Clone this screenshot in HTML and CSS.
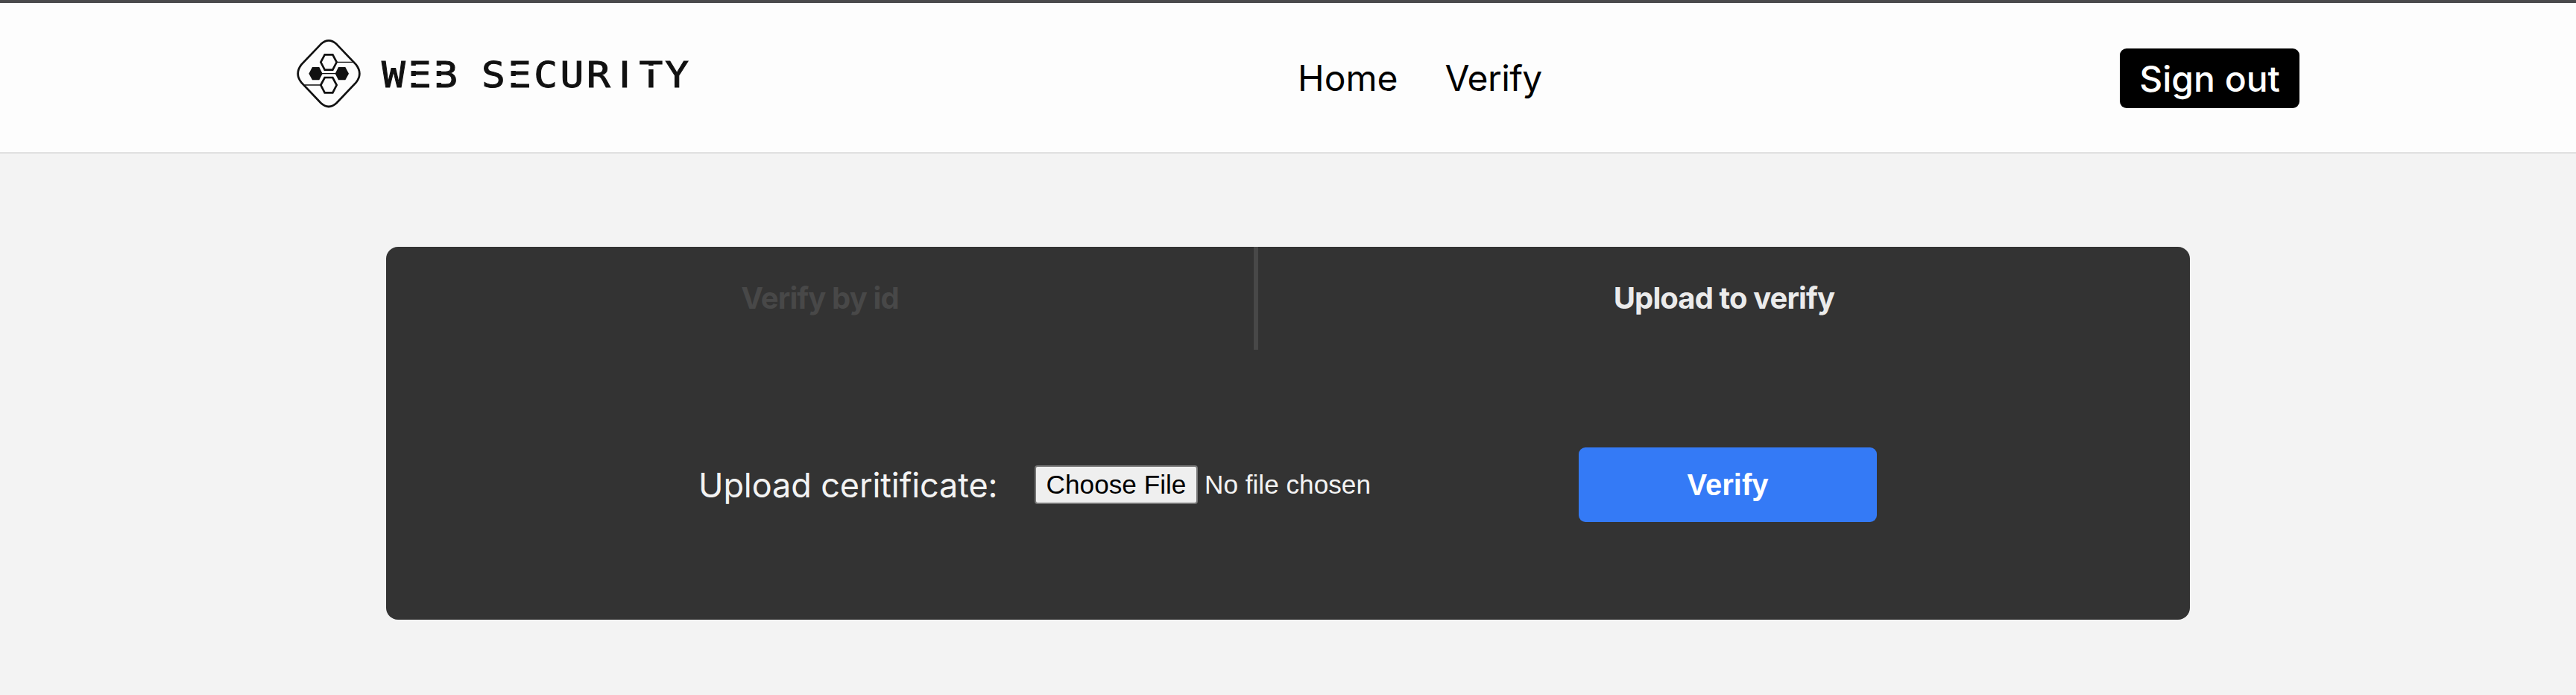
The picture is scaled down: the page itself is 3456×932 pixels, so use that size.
FILE: index.html
```html
<!DOCTYPE html>
<html lang="en">
<head>
<meta charset="utf-8">
<title>Web Security</title>
<link rel="stylesheet" href="styles.css">
</head>
<body>
<header class="header">
  <a class="brand">
    <svg class="brand-mark" viewBox="45 60 276 294" fill="none" stroke="#111">
      <path stroke-width="8" d="M151 88Q183 58 215 88L293 170Q321 206 293 242L215 324Q183 354 151 324L73 242Q45 206 73 170Z"/>
      <path stroke-width="8" d="M151 160L167 130H199L215 160L199 191H167ZM151 252L167 222H199L215 252L199 283H167Z"/>
      <path fill="#111" stroke="none" d="M103 206L117 180H145L158 206L145 232H117ZM209 206L222 180H250L264 206L250 232H222Z"/>
      <path stroke-width="4" d="M217 160H283M155 206H212M86 252H150"/>
    </svg>
    <svg class="brand-name" viewBox="508 66 420 68">
      <text class="wordmark" transform="scale(1.1 1)" y="117" x="480 511.800 543.600 572.700 601.800 633.600 665.500 697.700 730 761.800 794 825.500">WEB SECUR<tspan class="narrow">I</tspan>TY</text>
      <path class="stencil" d="M549 88h9v7h-9zM549 102h9v9h-9zM584 88h9v7h-9zM584 102h9v9h-9zM683 88h9v7h-9zM683 102h9v9h-9zM868 88h11v5h-11z"/>
    </svg>
  </a>
  <nav class="nav">
    <a>Home</a>
    <a class="nav-verify">Verify</a>
  </nav>
  <button class="signout">Sign out</button>
</header>
<main class="panel">
  <div class="tabs">
    <div class="tab tab-idle">Verify by id</div>
    <div class="tab">Upload to verify</div>
  </div>
  <form class="upload">
    <span class="label">Upload ceritificate:</span>
    <div class="file"><button type="button" class="choose">Choose File</button><span>No file chosen</span></div>
    <button type="button" class="verify">Verify</button>
  </form>
</main>
</body>
</html>
```
FILE: styles.css
```css
* { box-sizing: border-box; }
html { background: #f3f3f3; }
body {
  margin: 0;
  min-height: 932px;
  font-family: Inter, sans-serif;
}
button { border: 0; padding: 0; font-family: inherit; }
.header {
  display: grid;
  grid-template-columns: 1346px 1103px 241px;
  height: 206px;
  padding-left: 395px;
  border-top: 4px solid #4a4a4c;
  border-bottom: 2px solid #e0e0e0;
  background: #fdfdfd;
}
.brand { display: flex; gap: 21px; padding-top: 46px; }
.brand-mark { width: 92px; height: 98px; }
.brand-name { width: 420px; height: 68px; margin-top: 16px; overflow: visible; }
.wordmark {
  font-family: "DejaVu Sans Mono", monospace;
  font-size: 48px;
  text-anchor: middle;
  fill: #111;
  stroke: #111;
  stroke-width: 1px;
}
.narrow { font-family: "DejaVu Sans", sans-serif; }
.stencil { fill: #fdfdfd; }
.nav {
  display: flex;
  gap: 63px;
  padding-top: 72px;
  font-size: 48px;
  line-height: 58px;
}
.nav-verify { letter-spacing: -.6px; }
.signout {
  height: 80px;
  margin-top: 61px;
  border-radius: 9px;
  background: #000;
  color: #fff;
  font-size: 48px;
  font-weight: 500;
}
.panel {
  display: flow-root;
  width: 2420px;
  height: 500px;
  margin: 125px auto 0;
  border-radius: 16px;
  background: #333;
  color: #ebebeb;
}
.tabs { display: grid; grid-template-columns: 1170px 1250px; height: 138px; }
.tab {
  padding-top: 45px;
  text-align: center;
  font-size: 40px;
  line-height: 48px;
  font-weight: 700;
  letter-spacing: -.9px;
}
.tab-idle { border-right: 6px solid #484848; color: #484848; }
.upload {
  display: grid;
  grid-template-columns: 451px 730px 400px;
  align-items: center;
  height: 100px;
  margin: 131px 0 0 419px;
}
.label { font-size: 45px; letter-spacing: -.1px; color: #f3f3f3; }
.file {
  display: flex;
  align-items: center;
  gap: 9px;
  font: 35.2px "Liberation Sans", sans-serif;
  color: #f3f3f3;
}
.choose {
  width: 219px;
  height: 52px;
  border: 2px solid #767676;
  border-radius: 4px;
  background: #efefef;
  color: #000;
  font-size: 35.2px;
}
.verify {
  height: 100px;
  border-radius: 9px;
  background: #347af6;
  color: #fff;
  font: 700 40px "Liberation Sans", sans-serif;
}
```
